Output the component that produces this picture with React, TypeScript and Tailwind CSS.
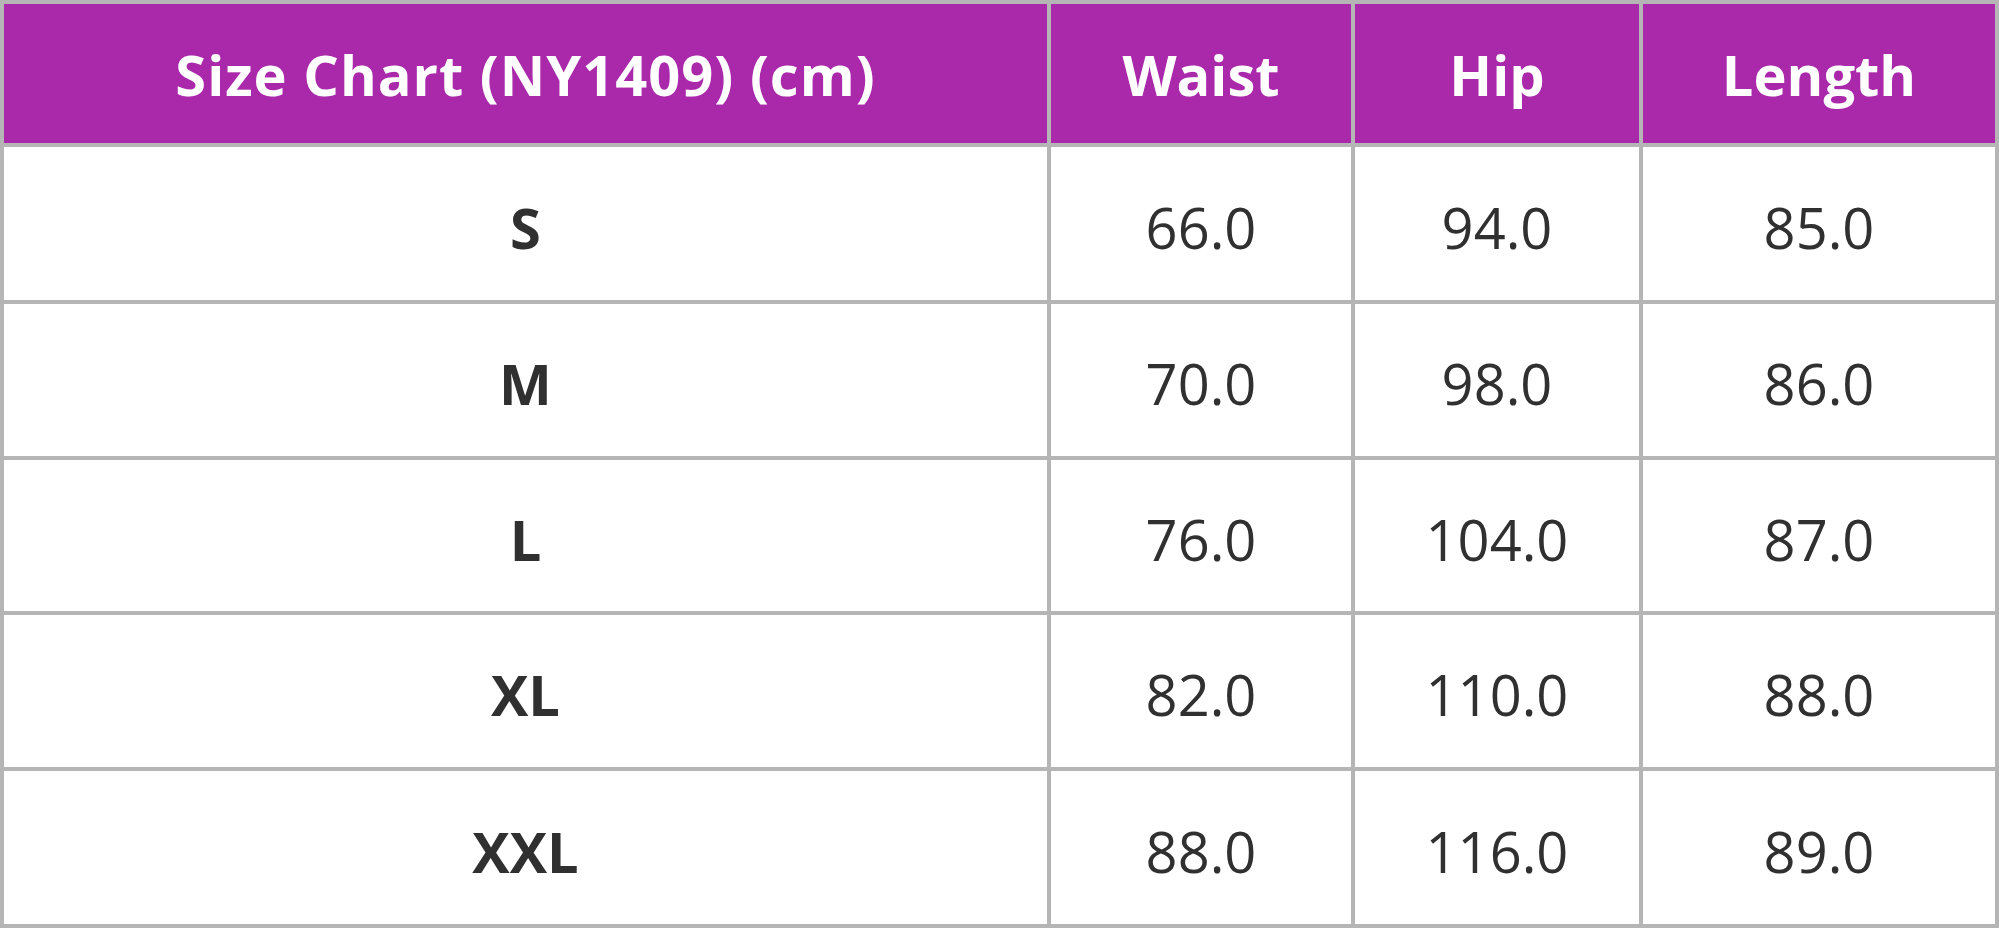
const headers = ['Size Chart (NY1409) (cm)', 'Waist', 'Hip', 'Length'];

const rows = [
  { size: 'S', waist: '66.0', hip: '94.0', length: '85.0' },
  { size: 'M', waist: '70.0', hip: '98.0', length: '86.0' },
  { size: 'L', waist: '76.0', hip: '104.0', length: '87.0' },
  { size: 'XL', waist: '82.0', hip: '110.0', length: '88.0' },
  { size: 'XXL', waist: '88.0', hip: '116.0', length: '89.0' },
];

export default function App() {
  return (
    <div
      className="w-[1999px] h-[928px] bg-[#b5b5b5] p-[4px] grid grid-cols-[1043px_300px_284px_352px] grid-rows-[139px_153px_152px_151px_152px_153px] gap-[4px]"
      style={{ fontFamily: '"Open Sans", "Noto Sans", sans-serif' }}
    >
      {headers.map((h, i) => (
        <div
          key={h}
          className={
            i === 0
              ? 'bg-[#aa28aa] text-white font-bold text-[56px] tracking-[1px] flex items-center justify-center'
              : 'bg-[#aa28aa] text-white font-bold text-[56px] flex items-center justify-center'
          }
        >
          {h}
        </div>
      ))}
      {rows.map((r) => (
        <>
          <div key={r.size} className="bg-white text-[#303030] font-bold text-[56px] flex items-center justify-center pt-[6px]">
            {r.size}
          </div>
          <div className="bg-white text-[#303030] text-[56px] flex items-center justify-center pt-[6px]">{r.waist}</div>
          <div className="bg-white text-[#303030] text-[56px] flex items-center justify-center pt-[6px]">{r.hip}</div>
          <div className="bg-white text-[#303030] text-[56px] flex items-center justify-center pt-[6px]">{r.length}</div>
        </>
      ))}
    </div>
  );
}
